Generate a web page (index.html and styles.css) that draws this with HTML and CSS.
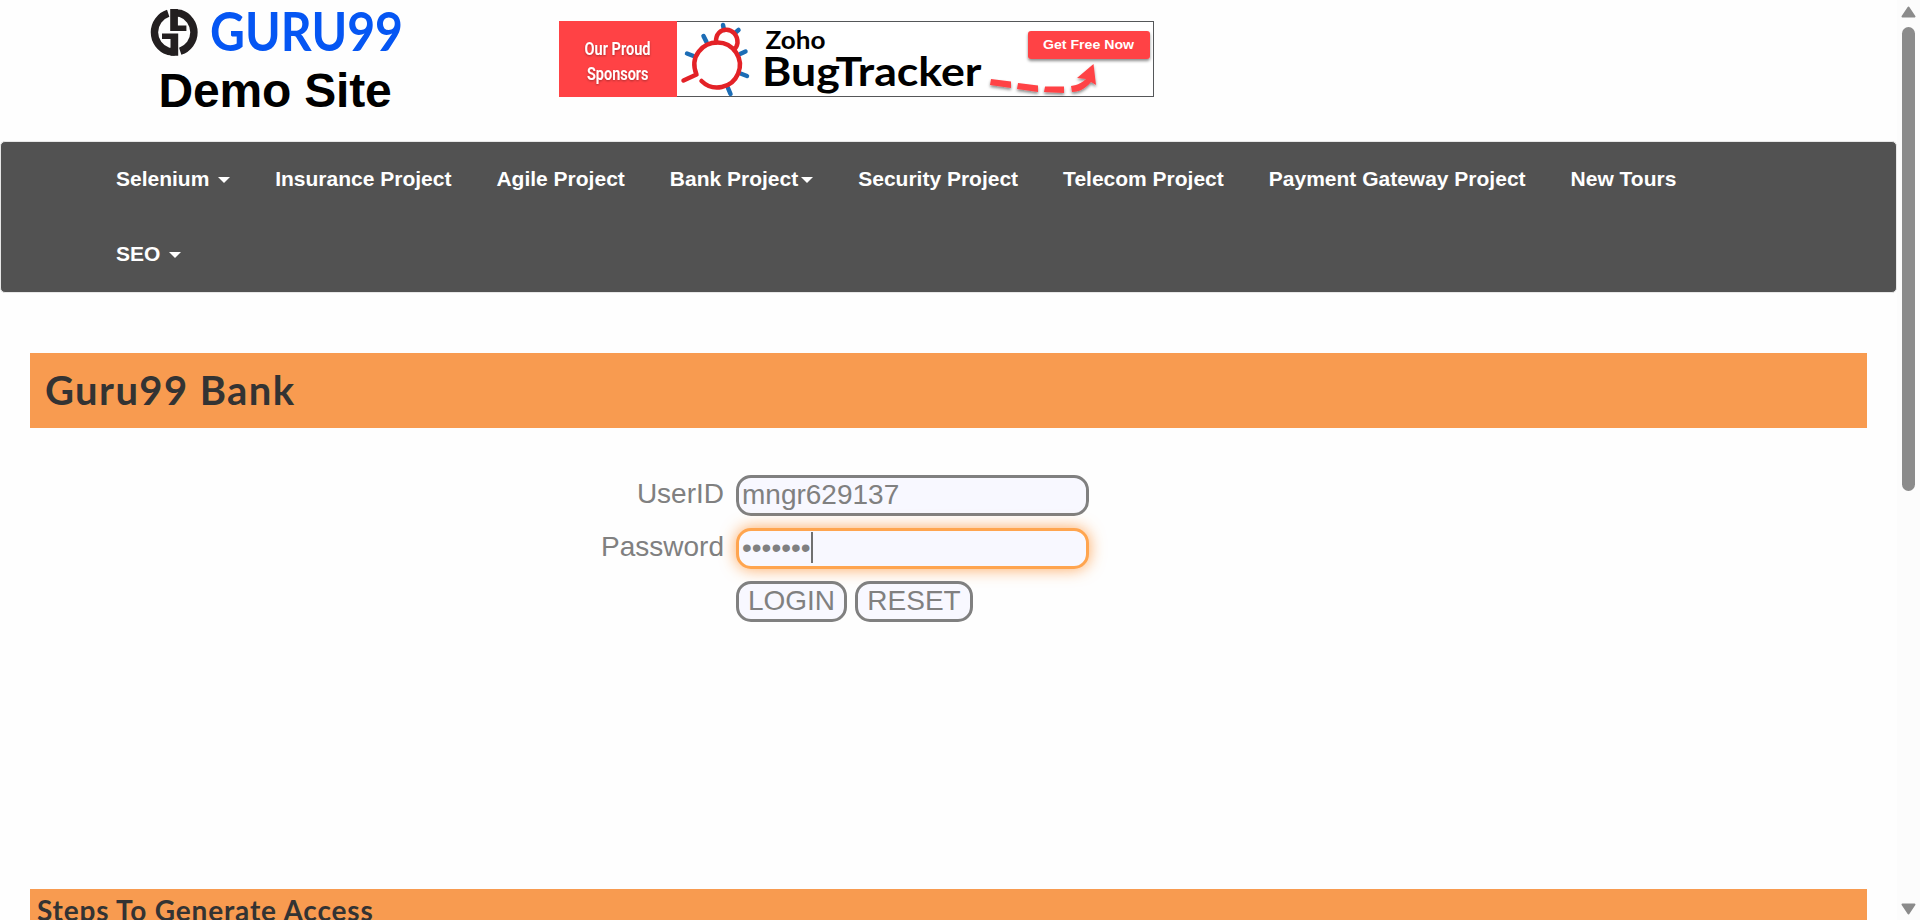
FILE: index.html
```html
<!DOCTYPE html>
<html lang="en">
<head>
<meta charset="utf-8">
<title>Guru99 Bank Home Page</title>
<link rel="stylesheet" href="styles.css">
</head>
<body>
<div class="page">
  <header class="top">
    <div class="brand">
      <svg class="logo" width="270" height="60" viewBox="0 0 270 60" role="img" aria-label="Guru99">
        <defs>
          <g id="half">
            <path d="M27.200 13.300A20 20 0 0 0 27.200 51.300L34 52" fill="none" stroke="#231f20" stroke-width="7.400"/>
            <path d="M21 33.500H37.200V55.700H29.500V39H21Z" fill="#231f20"/>
          </g>
        </defs>
        <use href="#half"/>
        <use href="#half" transform="rotate(180 33.200 32.300)"/>
        <text class="logo-word" x="69" y="50.500" textLength="193" lengthAdjust="spacingAndGlyphs">GURU99</text>
      </svg>
      <div class="site">Demo Site</div>
    </div>
    <svg class="banner" width="595" height="76" viewBox="0 0 595 76">
      <defs>
        <filter id="sh" x="-20%" y="-20%" width="140%" height="160%"><feDropShadow dx="0" dy="2" stdDeviation="1.500" flood-opacity=".45"/></filter>
        <filter id="ts" x="-20%" y="-20%" width="140%" height="160%"><feDropShadow dx="0" dy="1" stdDeviation="1" flood-opacity=".35"/></filter>
      </defs>
      <rect x=".5" y=".5" width="594" height="75" fill="#fff" stroke="#555759"/>
      <rect width="118" height="76" fill="#ff4245"/>
      <g class="sponsor" filter="url(#ts)">
        <text x="25.500" y="34" textLength="66" lengthAdjust="spacingAndGlyphs">Our Proud</text>
        <text x="28" y="58.500" textLength="61.500" lengthAdjust="spacingAndGlyphs">Sponsors</text>
      </g>
      <g fill="none" stroke="#1c6db6" stroke-width="4.500" stroke-linecap="round">
        <path d="M164 4L165 9M179.500 9L176 12M144.500 15L147.500 21M128 32.500L134.500 35M186.500 30.500L181 33M188 55L181.500 52.500M171.500 73L169 67"/>
      </g>
      <g fill="none" stroke="#e32227" stroke-width="4.500" stroke-linecap="round" stroke-linejoin="round">
        <path d="M124.500 59.500L137.500 53.500C130 35 144 21.500 158.500 21.500A22.500 22.500 0 1 1 142.500 60"/>
        <path d="M157 21.500C156 4 179 5 178.500 22C178 25 177 27 175 28.500"/>
      </g>
      <text class="zoho" x="206.500" y="28" textLength="60" lengthAdjust="spacingAndGlyphs">Zoho</text>
      <text class="bug" x="203" y="65" textLength="219.500" lengthAdjust="spacingAndGlyphs">BugTracker</text>
      <g filter="url(#sh)">
        <rect x="469" y="10" width="122" height="28" rx="3" fill="#ff4245"/>
        <path d="M432 58L452 60.500V67L431 64ZM459 62L479 64.500V71L458 68ZM486 65.500H505V72L485 71ZM512 65C519 64 524 61 527 58L518 57 534.500 43 537 64 532 61C527 67 521 71 513 71Z" fill="#ff4245"/>
      </g>
      <text class="free" x="484" y="28" textLength="91" lengthAdjust="spacingAndGlyphs">Get Free Now</text>
    </svg>
  </header>
  <nav class="nav">
    <a class="item">Selenium <i class="caret"></i></a>
    <a class="item">Insurance Project</a>
    <a class="item">Agile Project</a>
    <a class="item">Bank Project<i class="caret"></i></a>
    <a class="item">Security Project</a>
    <a class="item">Telecom Project</a>
    <a class="item">Payment Gateway Project</a>
    <a class="item">New Tours</a>
    <a class="item">SEO <i class="caret"></i></a>
  </nav>
  <h2 class="bar bank">Guru99 Bank</h2>
  <form class="login">
    <label class="label">UserID</label>
    <input class="field" type="text" value="mngr629137">
    <label class="label">Password</label>
    <div class="field focused"><span>•••••••</span><i class="cursor"></i></div>
    <div class="actions">
      <button class="btn login-btn" type="button">LOGIN</button>
      <button class="btn reset-btn" type="button">RESET</button>
    </div>
  </form>
  <h3 class="bar steps">Steps To Generate Access</h3>
</div>
<aside class="scroll">
  <svg width="15" height="12" viewBox="0 0 15 12"><path d="M7.500 1.500L13.500 10.500H1.500Z" fill="#8b8b8b" stroke="#8b8b8b" stroke-width="2" stroke-linejoin="round"/></svg>
  <div class="thumb"></div>
  <svg class="down" width="15" height="12" viewBox="0 0 15 12"><path d="M7.500 10.500L13.500 1.500H1.500Z" fill="#8b8b8b" stroke="#8b8b8b" stroke-width="2" stroke-linejoin="round"/></svg>
</aside>
</body>
</html>
```
FILE: styles.css
```css
* { box-sizing: border-box; }
html { background: #fefefe; }
body {
  margin: 0;
  display: flex;
  width: 1920px;
  height: 920px;
  overflow: hidden;
  font-family: "Liberation Sans", Arial, sans-serif;
  background: #fefefe;
}
.page { width: 1897px; height: 920px; overflow: hidden; }
.top { display: flex; align-items: flex-start; height: 141px; padding-left: 141px; }
.brand { width: 418px; }
.logo { display: block; overflow: visible; }
.logo-word { font: 700 54px Lato, sans-serif; fill: #0556f3; }
.site { margin-left: 17.500px; font-weight: 700; font-size: 48px; letter-spacing: -.200px; line-height: 56px; color: #000; margin-top: 3px; white-space: nowrap; }
.banner { margin-top: 21px; display: block; }
.sponsor { font: 600 19px Roboto, sans-serif; fill: #fff; }
.zoho { font: 700 24px Lato, sans-serif; fill: #000; }
.bug { font: 700 40px Lato, sans-serif; fill: #000; }
.free { font: 700 13px "Liberation Sans", sans-serif; fill: #fff; }
.nav {
  display: flex;
  flex-wrap: wrap;
  height: 152px;
  padding: 0 180px 0 92.500px;
  border: 1px solid #e7e7e7;
  border-radius: 5px;
  background: #525252;
}
.item { height: 75px; padding: 0 22.500px; line-height: 73px; font-size: 21px; font-weight: 700; color: #fff; white-space: nowrap; }
.caret { display: inline-block; margin-left: 3px; vertical-align: middle; border-top: 6px solid #fff; border-left: 6px solid transparent; border-right: 6px solid transparent; }
.bar { margin: 0 30px; background: #f89b50; color: #333; font-family: Lato, sans-serif; font-weight: 700; white-space: nowrap; }
.bank { margin-top: 60px; height: 75px; padding-left: 15px; font-size: 40px; line-height: 75px; letter-spacing: 1.400px; }
.login {
  display: grid;
  grid-template-columns: 724px 353px;
  grid-auto-rows: 41px;
  gap: 12px;
  height: 414px;
  align-content: start;
  margin-top: 47px;
  font-size: 28px;
  color: #808080;
}
.label { text-align: right; line-height: 38px; }
.field, .btn {
  height: 41px;
  border: 3px solid #808080;
  border-radius: 15px;
  background: #f8f8ff;
  color: #808080;
  font: 28px/33px "Liberation Sans", Arial, sans-serif;
}
.field { width: 353px; padding: 0 0 2px 3px; outline: none; }
.focused { display: flex; border-color: #ffa54f; box-shadow: 0 0 16px rgba(255, 140, 40, .75); }
.cursor { width: 2px; height: 31px; margin-top: 1px; background: #707070; }
.actions { grid-column: 2; display: flex; gap: 8px; }
.btn { padding: 0 0 2px; }
.login-btn { width: 111px; }
.reset-btn { width: 118px; }
.steps { height: 75px; padding-left: 7px; font-size: 28px; line-height: 43px; letter-spacing: .820px; }
.scroll { display: flex; flex-direction: column; align-items: center; width: 23px; height: 920px; padding: 6px 0 5px; background: #fcfcfc; }
.thumb { width: 13px; height: 464px; margin-top: 9px; border-radius: 7px; background: #8b8b8b; }
.down { margin-top: auto; }
```
